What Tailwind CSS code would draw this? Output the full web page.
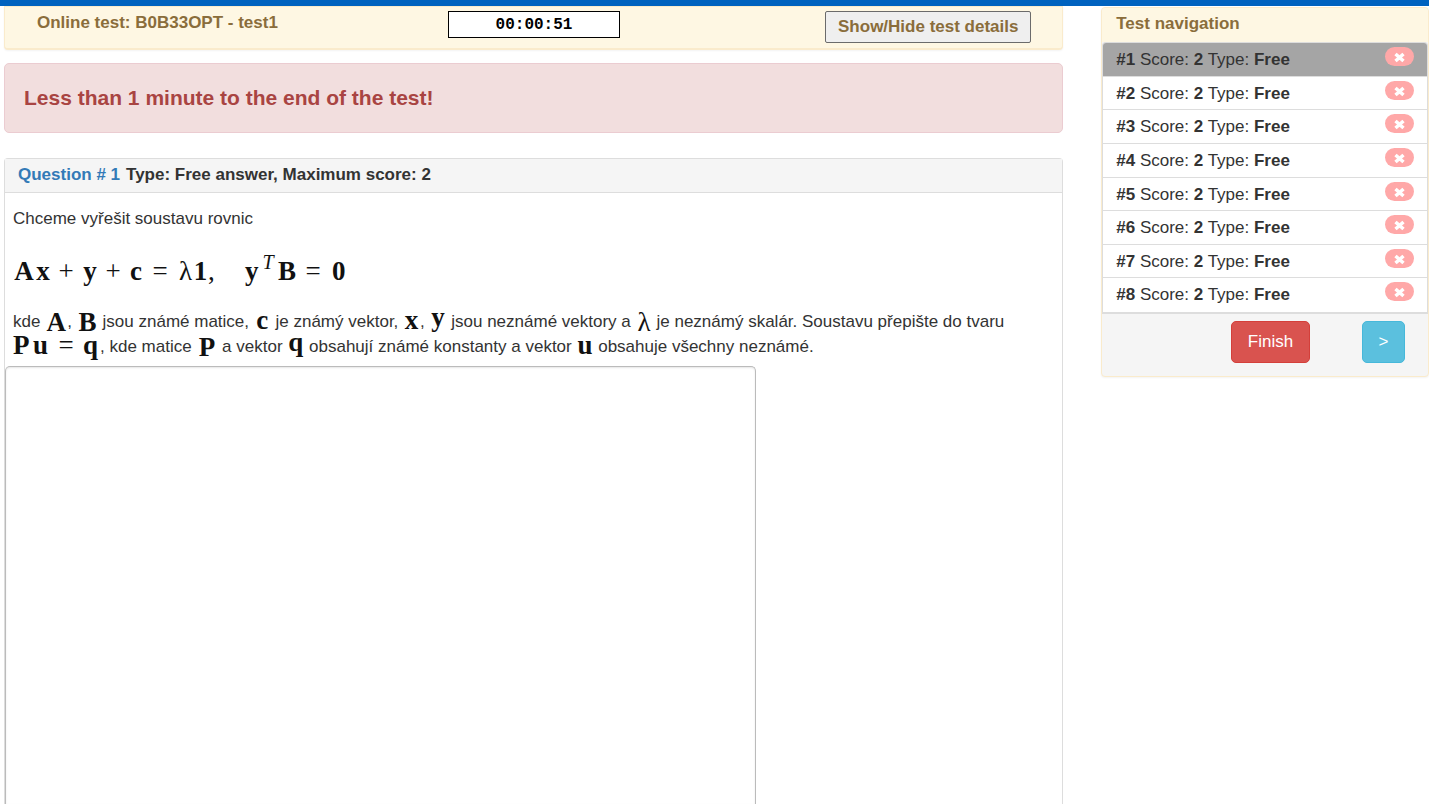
<!DOCTYPE html>
<html lang="cs">
<head>
<meta charset="utf-8">
<title>Online test: B0B33OPT - test1</title>
<script src="https://cdn.jsdelivr.net/npm/@tailwindcss/browser@4"></script>
</head>
<body class="h-screen overflow-hidden border-t-6 border-[#0062bf] bg-white font-['Liberation_Sans',Arial,sans-serif] text-[17px] leading-[25px] text-[#333]">
<div class="flex h-full items-start gap-[38px] pl-1">
  <main class="flex h-full min-w-0 flex-1 flex-col">
    <header class="flex h-[44px] shrink-0 items-start rounded-b-[4px] border border-b-2 border-[#faebcc] bg-[#fef7e3] pr-[31px] pl-8 font-bold text-[#8a6d3b] shadow-xs">
      <h1 class="w-[411px] pt-[3px]">Online test: B0B33OPT - test1</h1>
      <input aria-label="Remaining time" readonly value="00:00:51" class="mt-1 h-[27px] w-[172px] border border-black bg-white text-center font-['Liberation_Mono',monospace] text-[16px] font-bold text-black">
      <button type="button" class="mt-1 ml-auto h-8 w-[206px] rounded-[2px] border border-[#6b6b6b] bg-[#efefef] pb-0.5 whitespace-nowrap">Show/Hide test details</button>
    </header>

    <div role="alert" class="mt-[13px] flex h-[70px] shrink-0 items-center rounded-[5px] border border-[#ebccd1] bg-[#f2dede] px-[19px] pb-0.5 text-[21px] font-bold text-[#a94442]">Less than 1 minute to the end of the test!</div>

    <section class="mt-[25px] flex min-h-0 flex-1 flex-col rounded-t-[4px] border border-b-0 border-[#ddd]">
      <h2 class="h-[34px] shrink-0 border-b border-[#ddd] bg-[#f5f5f5] pt-[3px] pl-[13px] font-bold"><a href="#q1" class="mr-1.5 text-[#337ab7]">Question # 1</a>Type: Free answer, Maximum score: 2</h2>
      <div class="pt-[13px] pl-2">
        <p>Chceme vyřešit soustavu rovnic</p>
        <div class="mt-6 flex h-8 items-center font-['Liberation_Serif',serif] text-[27px] leading-8 font-bold text-[#111]">
          <span class="w-[22px] text-center">A</span><span class="w-4 text-center">x</span><span class="w-[30px] text-center font-normal">+</span><span class="w-[18px] text-center">y</span><span class="w-7 text-center font-normal">+</span><span class="w-[18px] text-center">c</span><span class="w-[30px] text-center font-normal">=</span><span class="ml-1 w-[14px] font-normal">λ</span><span class="w-[15px] text-center">1</span><span class="w-[37px] font-normal">,</span><span class="w-[15px]">y</span><sup class="-top-[9px] w-4 text-center text-[20px] leading-8 font-normal italic">T</sup><span class="w-[22px] text-center">B</span><span class="w-[30px] text-center font-normal">=</span><span class="ml-1">0</span>
        </div>
        <p class="mt-[22px]">kde <b class="inline-block h-2 w-[22px] text-center align-[-4px] font-['Liberation_Serif',serif] text-[27px] leading-2 text-[#111]">A</b>, <b class="inline-block h-2 w-[22px] text-center align-[-4px] font-['Liberation_Serif',serif] text-[27px] leading-2 text-[#111]">B</b><span class="ml-1">jsou známé matice, </span><b class="mx-px inline-block h-2 w-[15px] text-center align-[-2px] font-['Liberation_Serif',serif] text-[27px] leading-2 text-[#111]">c</b> je známý vektor, <b class="mx-px inline-block h-2 w-[15px] text-center align-[-2px] font-['Liberation_Serif',serif] text-[27px] leading-2 text-[#111]">x</b>, <b class="mx-px inline-block h-2 w-[15px] text-center align-[1px] font-['Liberation_Serif',serif] text-[27px] leading-2 text-[#111]">y</b> jsou neznámé vektory a <span class="mx-px inline-block h-2 w-[15px] text-center align-[-4px] font-['Liberation_Serif',serif] text-[27px] leading-2 text-[#111]">λ</span><span class="ml-1">je neznámý skalár. Soustavu přepište do tvaru</span><br><span class="inline-flex h-2 w-[87px] align-[-2px] font-['Liberation_Serif',serif] text-[27px] leading-2 font-bold text-[#111]"><span class="w-[20px]">P</span><span class="w-[16px]">u</span><span class="w-[34px] text-center font-normal">=</span><span>q</span></span>, kde matice <b class="mx-px inline-block h-2 w-[19px] text-center align-[-4px] font-['Liberation_Serif',serif] text-[27px] leading-2 text-[#111]">P</b> a vektor <b class="mx-px inline-block h-2 w-[15px] text-center align-[1px] font-['Liberation_Serif',serif] text-[27px] leading-2 text-[#111]">q</b> obsahují známé konstanty a vektor <b class="mx-px inline-block h-2 w-[15px] text-center align-[-2px] font-['Liberation_Serif',serif] text-[27px] leading-2 text-[#111]">u</b> obsahuje všechny neznámé.</p>
      </div>
      <textarea aria-label="Answer" class="mt-[7px] block min-h-0 w-[71%] flex-1 resize-none rounded-t-[5px] border border-b-0 border-[#bbb] bg-white p-2 shadow-[inset_0_1px_2px_rgba(0,0,0,0.1)]"></textarea>
    </section>
  </main>

  <aside class="mt-px w-[23%] shrink-0 rounded-[4px] border border-[#faebcc] bg-[#f5f5f5] shadow-xs">
    <h2 class="h-[34px] rounded-t-[4px] bg-[#fef7e3] pt-[3px] pl-[14px] font-bold text-[#8a6d3b]">Test navigation</h2>
    <nav>
      <ul class="grid h-[272px] grid-rows-8 overflow-hidden rounded-t-[4px] border border-b-2 border-[#ddd] bg-white">
        <li class="border-b border-[#ddd] bg-[#a5a5a5]"><a href="#q1" class="flex items-start justify-between pt-1 pr-[13px] pl-[13px]"><span><b>#1</b> Score: <b>2</b> Type: <b>Free</b></span><svg class="h-[19px] w-[29px]" viewBox="0 0 29 19"><rect width="29" height="19" rx="9.5" fill="#ffa8a8"/><path d="M10.5 7 18.5 14M18.5 7 10.5 14" stroke="#fff" stroke-width="3.5"/></svg></a></li>
        <li class="border-b border-[#ddd]"><a href="#q2" class="flex items-start justify-between pt-1 pr-[13px] pl-[13px]"><span><b>#2</b> Score: <b>2</b> Type: <b>Free</b></span><svg class="h-[19px] w-[29px]" viewBox="0 0 29 19"><rect width="29" height="19" rx="9.5" fill="#ffa8a8"/><path d="M10.5 7 18.5 14M18.5 7 10.5 14" stroke="#fff" stroke-width="3.5"/></svg></a></li>
        <li class="border-b border-[#ddd]"><a href="#q3" class="flex items-start justify-between pt-1 pr-[13px] pl-[13px]"><span><b>#3</b> Score: <b>2</b> Type: <b>Free</b></span><svg class="h-[19px] w-[29px]" viewBox="0 0 29 19"><rect width="29" height="19" rx="9.5" fill="#ffa8a8"/><path d="M10.5 7 18.5 14M18.5 7 10.5 14" stroke="#fff" stroke-width="3.5"/></svg></a></li>
        <li class="border-b border-[#ddd]"><a href="#q4" class="flex items-start justify-between pt-1 pr-[13px] pl-[13px]"><span><b>#4</b> Score: <b>2</b> Type: <b>Free</b></span><svg class="h-[19px] w-[29px]" viewBox="0 0 29 19"><rect width="29" height="19" rx="9.5" fill="#ffa8a8"/><path d="M10.5 7 18.5 14M18.5 7 10.5 14" stroke="#fff" stroke-width="3.5"/></svg></a></li>
        <li class="border-b border-[#ddd]"><a href="#q5" class="flex items-start justify-between pt-1 pr-[13px] pl-[13px]"><span><b>#5</b> Score: <b>2</b> Type: <b>Free</b></span><svg class="h-[19px] w-[29px]" viewBox="0 0 29 19"><rect width="29" height="19" rx="9.5" fill="#ffa8a8"/><path d="M10.5 7 18.5 14M18.5 7 10.5 14" stroke="#fff" stroke-width="3.5"/></svg></a></li>
        <li class="border-b border-[#ddd]"><a href="#q6" class="flex items-start justify-between pt-1 pr-[13px] pl-[13px]"><span><b>#6</b> Score: <b>2</b> Type: <b>Free</b></span><svg class="h-[19px] w-[29px]" viewBox="0 0 29 19"><rect width="29" height="19" rx="9.5" fill="#ffa8a8"/><path d="M10.5 7 18.5 14M18.5 7 10.5 14" stroke="#fff" stroke-width="3.5"/></svg></a></li>
        <li class="border-b border-[#ddd]"><a href="#q7" class="flex items-start justify-between pt-1 pr-[13px] pl-[13px]"><span><b>#7</b> Score: <b>2</b> Type: <b>Free</b></span><svg class="h-[19px] w-[29px]" viewBox="0 0 29 19"><rect width="29" height="19" rx="9.5" fill="#ffa8a8"/><path d="M10.5 7 18.5 14M18.5 7 10.5 14" stroke="#fff" stroke-width="3.5"/></svg></a></li>
        <li><a href="#q8" class="flex items-start justify-between pt-1 pr-[13px] pl-[13px]"><span><b>#8</b> Score: <b>2</b> Type: <b>Free</b></span><svg class="h-[19px] w-[29px]" viewBox="0 0 29 19"><rect width="29" height="19" rx="9.5" fill="#ffa8a8"/><path d="M10.5 7 18.5 14M18.5 7 10.5 14" stroke="#fff" stroke-width="3.5"/></svg></a></li>
      </ul>
    </nav>
    <div class="flex h-[62px] items-start justify-end gap-[52px] pt-[7px] pr-[23px] text-white">
      <button type="button" class="h-[42px] w-[79px] rounded-[5px] border border-[#d43f3a] bg-[#d9534f] pb-0.5">Finish</button>
      <button type="button" aria-label="Next question" class="h-[42px] w-[43px] rounded-[5px] border border-[#46b8da] bg-[#5bc0de] pb-0.5">&gt;</button>
    </div>
  </aside>
</div>
</body>
</html>
